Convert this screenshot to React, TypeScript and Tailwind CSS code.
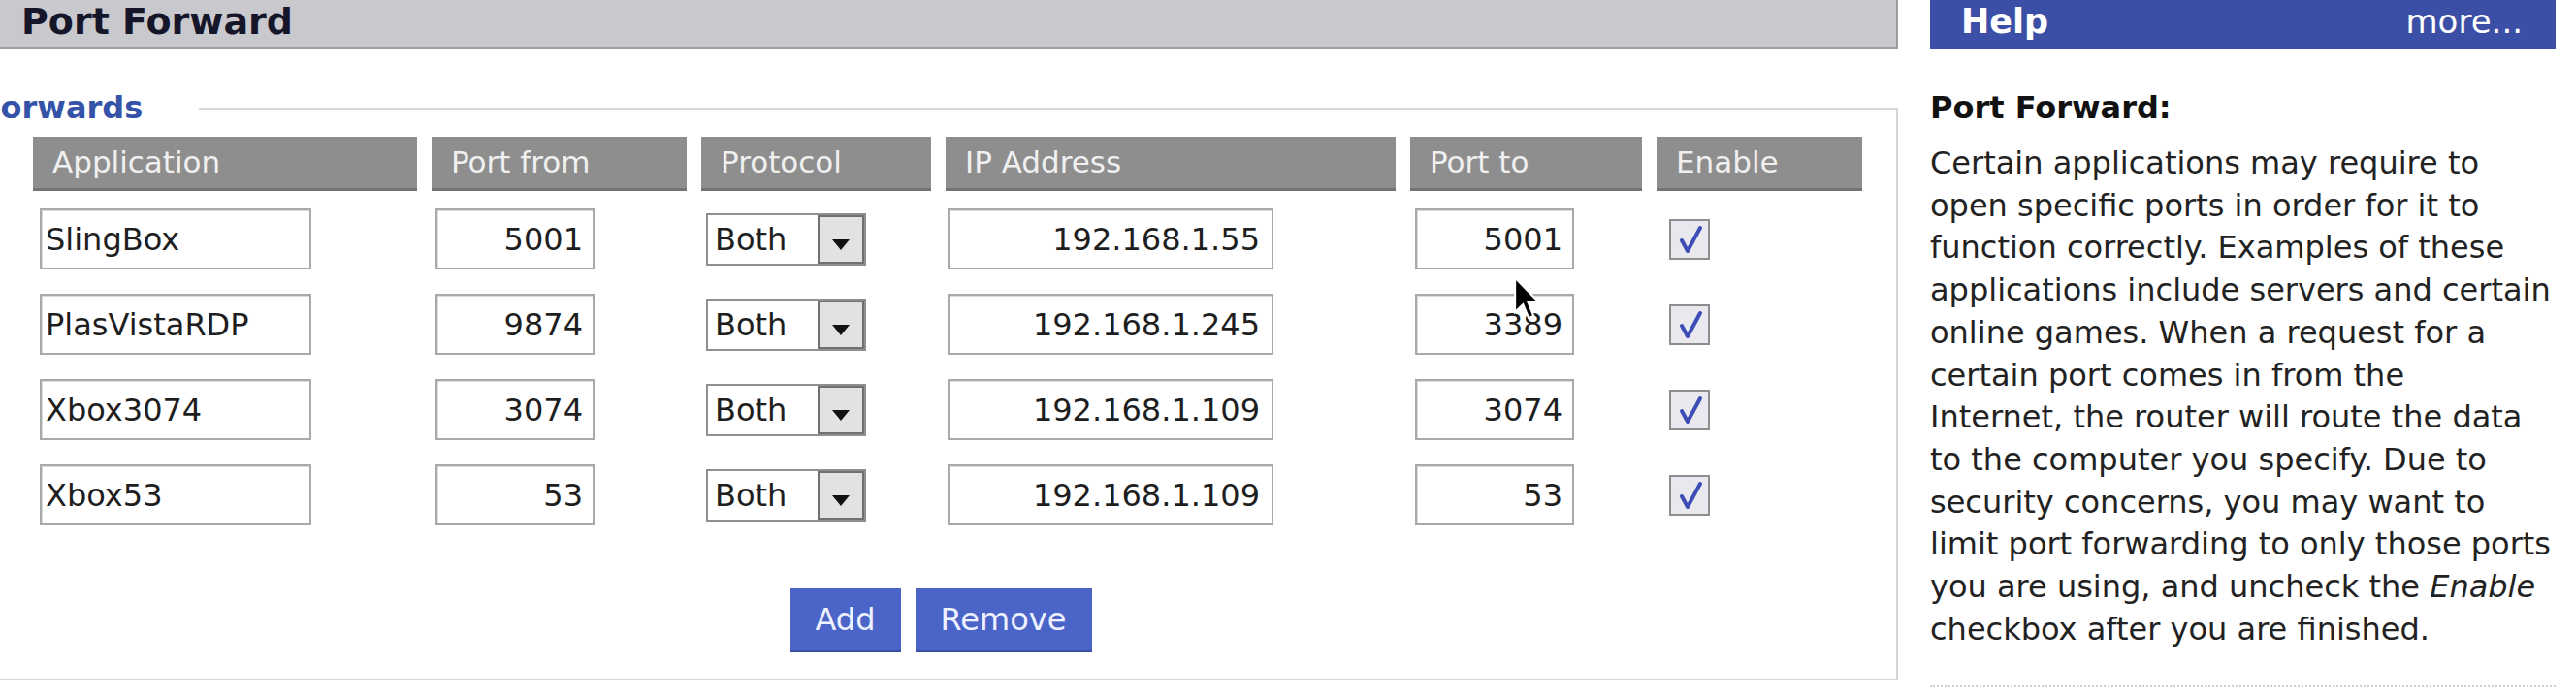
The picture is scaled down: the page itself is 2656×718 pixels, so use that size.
import React from 'react';

const rows = [
  { app: 'SlingBox', from: '5001', ip: '192.168.1.55', to: '5001' },
  { app: 'PlasVistaRDP', from: '9874', ip: '192.168.1.245', to: '3389' },
  { app: 'Xbox3074', from: '3074', ip: '192.168.1.109', to: '3074' },
  { app: 'Xbox53', from: '53', ip: '192.168.1.109', to: '53' },
];

const headers = ['Application', 'Port from', 'Protocol', 'IP Address', 'Port to', 'Enable'];

// column grid shared by the header and the rows
const grid = 'grid grid-cols-[396px_263px_237px_464px_239px_212px] gap-x-[15px]';

const field =
  'h-[63px] border-2 border-[#a9a9a9] bg-white text-[32px] text-[#1e1e1e] outline-none shadow-[inset_1px_1px_0_#dcdcdc]';

function ProtocolSelect() {
  return (
    <div className="ml-[5px] flex h-[54px] w-[165px] border-2 border-[#8f8f8f] bg-white">
      <span className="flex-1 pl-[7px] text-[32px] leading-[50px] text-[#1e1e1e]">Both</span>
      <div className="flex w-[48px] items-end justify-center border-2 border-[#707070] bg-[#e2e2e2] pb-[11px]">
        <svg width="20" height="13" viewBox="0 0 20 13">
          <polygon points="1,1 19,1 10,12" fill="#111" />
        </svg>
      </div>
    </div>
  );
}

function Check() {
  return (
    <div className="ml-[13px] flex h-[42px] w-[42px] items-center justify-center border-2 border-[#8e8e8e] bg-[#e8e8ee]">
      <svg width="34" height="34" viewBox="0 0 34 34">
        <path d="M9 18 L15 29 L28 5" fill="none" stroke="#3d4db5" strokeWidth="4" strokeLinecap="round" strokeLinejoin="round" />
      </svg>
    </div>
  );
}

export default function App() {
  return (
    <div className="relative h-[718px] w-[2656px] overflow-hidden bg-white font-['DejaVu_Sans',sans-serif] text-[#222]">
      <div className="flex">
        {/* main panel (page is scrolled a little to the right) */}
        <div className="-ml-[40px] w-[1997px] shrink-0">
          <div className="h-[51px] border-b-2 border-r-2 border-[#9d9d9f] bg-[#c9c8cd] pl-[62px]">
            <h1 className="text-[38px] font-bold leading-[44px] text-[#16162a]">Port Forward</h1>
          </div>

          <fieldset className="mt-[42px] border-2 border-[#d6d6d6] pb-[27px]">
            <legend className="ml-[18px] pr-[58px] text-[32px] font-bold leading-[37px] text-[#3452a8]">
              Forwards
            </legend>

            <div className="pl-[72px] pt-[11px]">
              <div className={grid}>
                {headers.map((h) => (
                  <div
                    key={h}
                    className="flex h-[56px] items-center border-b-[3px] border-[#737373] bg-[#8e8e8e] pl-[20px] text-[31px] text-[#f0f0f0]"
                  >
                    {h}
                  </div>
                ))}
              </div>

              <div className="mt-[18px] flex flex-col gap-y-[25px]">
                {rows.map((r) => (
                  <div key={r.app} className={grid}>
                    <div className="flex items-center">
                      <input readOnly value={r.app} className={`${field} ml-[7px] w-[280px] pl-[4px]`} />
                    </div>
                    <div className="flex items-center">
                      <input readOnly value={r.from} className={`${field} ml-[4px] w-[164px] pr-[10px] text-right`} />
                    </div>
                    <div className="flex items-center">
                      <ProtocolSelect />
                    </div>
                    <div className="flex items-center">
                      <input readOnly value={r.ip} className={`${field} ml-[2px] w-[336px] pr-[12px] text-right`} />
                    </div>
                    <div className="flex items-center">
                      <input readOnly value={r.to} className={`${field} ml-[5px] w-[164px] pr-[10px] text-right`} />
                    </div>
                    <div className="flex items-center">
                      <Check />
                    </div>
                  </div>
                ))}
              </div>

              <div className="mt-[65px] flex w-[1886px] justify-center gap-x-[15px] pr-[14px]">
                <button className="h-[66px] w-[114px] border-b-2 border-[#3a4fa6] bg-[#4a64c7] text-[32px] text-[#eef1ff]">
                  Add
                </button>
                <button className="h-[66px] w-[182px] border-b-2 border-[#3a4fa6] bg-[#4a64c7] text-[32px] text-[#eef1ff]">
                  Remove
                </button>
              </div>
            </div>
          </fieldset>
        </div>

        {/* help column */}
        <div className="ml-[33px] w-[645px] shrink-0">
          <div className="flex h-[51px] items-start justify-between bg-[#3c4fa6] pl-[32px] pr-[34px] text-white">
            <span className="text-[35px] font-bold leading-[44px]">Help</span>
            <span className="text-[34px] leading-[44px]">more...</span>
          </div>
          <h2 className="mt-[38px] text-[32px] font-bold leading-[44px] text-[#111]">Port Forward:</h2>
          <p className="mt-[14px] whitespace-nowrap text-[32px] leading-[43.7px] text-[#222]">
            Certain applications may require to
            <br />
            open specific ports in order for it to
            <br />
            function correctly. Examples of these
            <br />
            applications include servers and certain
            <br />
            online games. When a request for a
            <br />
            certain port comes in from the
            <br />
            Internet, the router will route the data
            <br />
            to the computer you specify. Due to
            <br />
            security concerns, you may want to
            <br />
            limit port forwarding to only those ports
            <br />
            you are using, and uncheck the <i>Enable</i>
            <br />
            checkbox after you are finished.
          </p>
          <div className="mt-[36px] border-t-2 border-dotted border-[#cfcfcf]" />
        </div>
      </div>

      {/* mouse pointer */}
      <svg className="absolute left-[1561px] top-[285px]" width="28" height="46" viewBox="0 0 13 21">
        <path d="M0.5 0.5 L0.5 17 L4.3 13.3 L7 19.8 L9.4 18.8 L6.8 12.4 L12 12.4 Z" fill="#000" stroke="#fff" strokeWidth="1" />
      </svg>
    </div>
  );
}
